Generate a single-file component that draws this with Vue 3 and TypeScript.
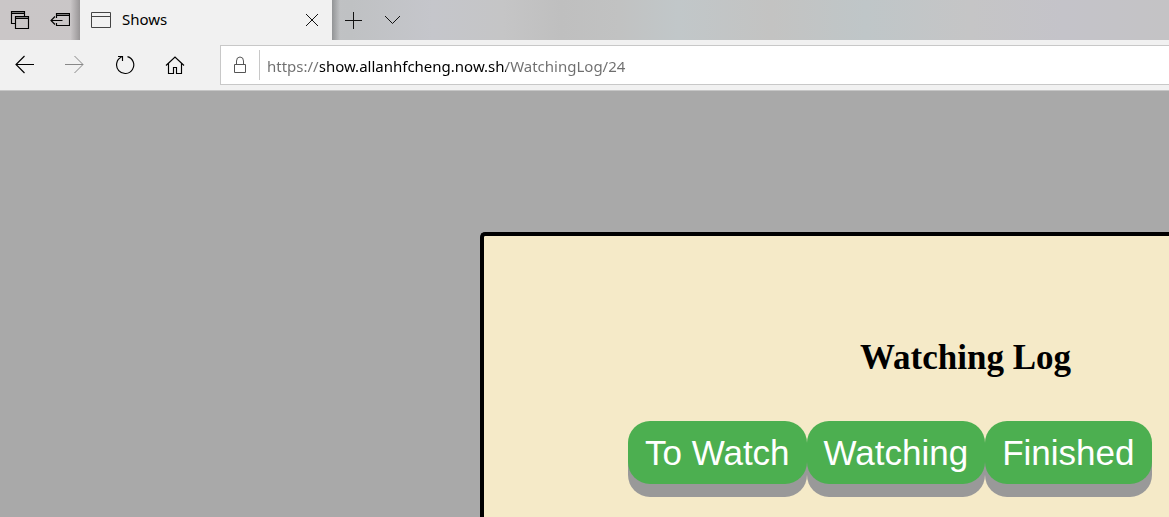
<script setup lang="ts">
import { ref } from 'vue'

const address = ref('https://show.allanhfcheng.now.sh/WatchingLog/24')
const filters: string[] = ['To Watch', 'Watching', 'Finished']
</script>

<template>
  <div class="browser">
    <header class="titlebar">
      <div class="tab-tools">
        <button class="icon-button" type="button" aria-label="Tabs you've set aside">
          <svg width="20" height="20" viewBox="0 0 20 20">
            <path d="M1 2.5H15M5 7.5H19" class="bar" />
            <path d="M5.5 13.5H1.5V1.5H14.5V6M1.5 3.5H14.5M5.5 6.5H18.5V18.5H5.5ZM5.5 8.5H18.5" class="strong" />
          </svg>
        </button>
        <button class="icon-button" type="button" aria-label="Set these tabs aside">
          <svg width="20" height="20" viewBox="0 0 20 20">
            <path d="M6 4.5H20" class="bar" />
            <path d="M6.5 8V3.5H19.5V15.5H6.5V13M6.5 5.5H19.5M1 10.5H12.5M5 6.5L1 10.5L5 14.5" class="strong" />
          </svg>
        </button>
      </div>
      <div class="tab">
        <svg width="22" height="18" viewBox="0 0 22 18" class="page-icon">
          <path d="M1.5 1.5H20.5V16.5H1.5ZM1.5 5.5H20.5" />
        </svg>
        <span class="tab-name">Shows</span>
        <button class="icon-button close" type="button" aria-label="Close tab">
          <svg width="14" height="14" viewBox="0 0 14 14">
            <path d="M1 1L13 13M13 1L1 13" />
          </svg>
        </button>
      </div>
      <div class="tab-actions">
        <button class="icon-button" type="button" aria-label="New tab">
          <svg width="18" height="18" viewBox="0 0 18 18">
            <path d="M8.5 1V18M0 9.5H17" />
          </svg>
        </button>
        <button class="icon-button" type="button" aria-label="Show tab previews">
          <svg width="18" height="18" viewBox="0 0 18 18">
            <path d="M1 5L8.5 12.5L16 5" />
          </svg>
        </button>
      </div>
    </header>

    <nav class="toolbar" aria-label="Navigation">
      <div class="nav-buttons">
        <button class="icon-button" type="button" aria-label="Back">
          <svg width="20" height="20" viewBox="0 0 20 20">
            <path d="M19 9.5H1M9.5 1L1 9.5L9.5 18" class="strong" />
          </svg>
        </button>
        <button class="icon-button" type="button" aria-label="Forward" disabled>
          <svg width="20" height="20" viewBox="0 0 20 20">
            <path d="M0 9.5H18M9.5 1L18 9.5L9.5 18" />
          </svg>
        </button>
        <button class="icon-button" type="button" aria-label="Refresh">
          <svg width="20" height="20" viewBox="0 0 20 20">
            <path d="M12.5 1.6A8.6 8.6 0 1 1 6.5 2.1M3 1.5H7.5V6" class="strong" />
          </svg>
        </button>
        <button class="icon-button" type="button" aria-label="Home">
          <svg width="20" height="20" viewBox="0 0 20 20">
            <path d="M1 10.5L10 2L19 10.5M3.5 8.5V18.5H8.5V12.5H11.5V18.5H16.5V8.5" class="strong" />
          </svg>
        </button>
      </div>
      <div class="address">
        <svg width="14" height="18" viewBox="0 0 14 18" class="lock">
          <path d="M1.5 8.5H12.5V16.5H1.5ZM3.5 8.5V5A3.5 4 0 0 1 10.5 5V8.5" />
        </svg>
        <input v-model="address" class="url" type="text" aria-label="Address" spellcheck="false" />
      </div>
    </nav>

    <main class="page">
      <section class="card">
        <h1>Watching Log</h1>
        <div class="filters">
          <button v-for="name in filters" :key="name" type="button" class="filter">{{ name }}</button>
        </div>
      </section>
    </main>
  </div>
</template>

<style>
body {
  overflow: hidden;
}
</style>

<style scoped>
.browser {
  display: flex;
  flex-direction: column;
  height: 100vh;
  font-family: "Noto Sans", "Open Sans", sans-serif;
  background: #a9a9a9;
}

svg {
  display: block;
  fill: none;
  stroke: #111;
  stroke-width: 1;
}

.strong {
  stroke: #000;
  stroke-width: 1.15;
}

.bar {
  stroke: #777;
}

.icon-button {
  display: flex;
  padding: 0;
  border: 0;
  background: none;
}

.titlebar {
  display: flex;
  flex: none;
  height: 40px;
  background: linear-gradient(90deg, #cac6c7 0%, #c9c6c7 12%, #bfc1c3 30%, #c5c6cb 37%, #c5c5c6 43%, #bfbfbf 48%, #c1c2c2 53%, #c1c7c9 58%, #c3c3c2 66%, #bfc6c8 74%, #c5c5c6 83%, #c4c3c9 91%, #c4c3c5 100%);
}

.tab-tools {
  display: flex;
  align-items: center;
  gap: 20px;
  box-sizing: border-box;
  width: 80px;
  padding-left: 10px;
  background: linear-gradient(90deg, transparent 88%, #989596);
}

.tab {
  display: flex;
  align-items: center;
  box-sizing: border-box;
  width: 252px;
  padding: 0 13px 0 10px;
  background: #f1f1f1;
}

.page-icon {
  stroke: #444;
}

.tab-name {
  flex: 1;
  margin-left: 10px;
  padding-bottom: 2px;
  font-size: 15px;
  line-height: 20px;
}

.tab-actions {
  display: flex;
  flex: 1;
  align-items: center;
  gap: 21px;
  padding-left: 13px;
  background: linear-gradient(90deg, #929496, transparent 8px);
}

.toolbar {
  display: flex;
  flex: none;
  align-items: center;
  height: 50px;
  background: #f1f1f1;
  border-bottom: 1px solid #c6c6c6;
}

.nav-buttons {
  display: flex;
  gap: 30px;
  box-sizing: border-box;
  width: 220px;
  padding-left: 15px;
}

.icon-button:disabled svg {
  stroke: #888;
}

.address {
  display: flex;
  flex: 1;
  align-items: center;
  box-sizing: border-box;
  height: 40px;
  padding-left: 12px;
  border: 1px solid #c8c8c8;
  border-right: 0;
  background: #fff;
}

.lock {
  margin-right: 12px;
  stroke: #555;
}

.url {
  flex: 1;
  height: 30px;
  box-sizing: border-box;
  padding: 2px 0 0 7px;
  border: 0;
  border-left: 1px solid #c8c8c8;
  outline: 0;
  font-family: inherit;
  font-size: 15px;
  color: #000;
  background: linear-gradient(90deg, #6e6e6e 60px, #000 60px, #000 246px, #6e6e6e 246px);
  background-clip: text;
  -webkit-text-fill-color: transparent;
}

.page {
  flex: 1;
  min-height: 0;
  overflow: hidden;
  padding: 141px 0 0 480px;
}

.card {
  min-height: 100%;
  border: 4px solid #000;
  border-right: 0;
  border-radius: 5px 0 0 0;
  background: #f5eac8;
}

h1 {
  margin: 101px 0 0 376px;
  font-family: "Liberation Serif", serif;
  font-size: 35px;
  line-height: 42px;
  white-space: nowrap;
}

.filters {
  display: flex;
  margin: 42px 0 0 144px;
}

.filter {
  flex: none;
  height: 63px;
  padding: 0 17px;
  border: 0;
  border-radius: 22px;
  background: #4caf50;
  box-shadow: 0 13px #999;
  color: #fff;
  font-family: "Liberation Sans", sans-serif;
  font-size: 35px;
  line-height: 40px;
  white-space: nowrap;
}
</style>
